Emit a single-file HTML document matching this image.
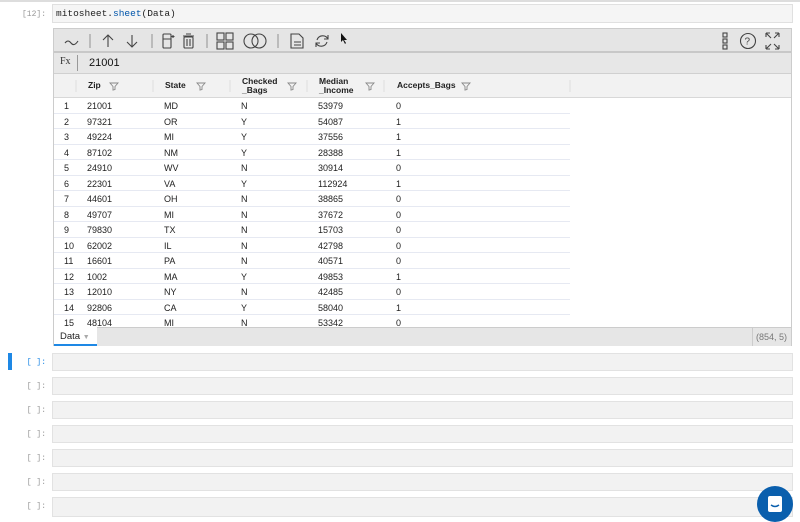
<!DOCTYPE html>
<html><head><style>
*{box-sizing:border-box;margin:0;padding:0}
body{width:800px;height:514px;overflow:hidden;background:#fff;font-family:"Liberation Sans",sans-serif;position:relative}
.abs{position:absolute}
.prompt{position:absolute;font-family:"Liberation Mono",monospace;font-size:8px;color:#999;text-align:right;width:46px;left:0}
.cell{position:absolute;left:52px;width:741px;height:18px;background:#f2f2f2;border:1px solid #e2e2e2}
.tb svg{position:absolute}
.hdr{position:absolute;top:74px;height:24px;font-size:8.5px;font-weight:bold;color:#222;line-height:9.5px;display:flex;align-items:center}
.row{position:absolute;left:54px;width:516px;height:15.5px;border-bottom:1px solid #e6e9f2;font-size:9px;color:#222}
.row span{position:absolute;top:3px}
</style></head><body>
<div class="abs" style="left:0;top:0;width:800px;height:2px;background:#ddd"></div>
<div class="prompt" style="top:10px">[12]:</div>
<div class="abs" style="left:52px;top:4px;width:741px;height:19px;background:#f5f5f5;border:1px solid #e0e0e0;font-family:'Liberation Mono',monospace;font-size:9.5px;padding:3px 3px;color:#222">mitosheet.<span style="color:#0055aa">sheet</span>(Data)</div>

<div class="abs" style="left:53px;top:28px;width:739px;height:318px;border:1px solid #ccc;background:#fff"></div>
<div class="abs tb" style="left:54px;top:29px;width:737px;height:24px;background:#e5e5e5;border-bottom:2px solid #c8c8c8">
<svg width="737" height="24" fill="none" stroke="#444" stroke-width="1.1">
<path d="M11 14 q3 -4 6 0 q3 4 7 -2"/>
<path d="M36 5v14M98 5v14M153 5v14M224 5v14" stroke="#999"/>
<path d="M54 6v12M49 11l5-5 5 5"/>
<path d="M78 6v12M73 13l5 5 5-5"/>
<rect x="109" y="5" width="8" height="14" rx="1"/><path d="M109 10h8M119 6v3M117.5 7.5h3"/>
<rect x="130" y="8" width="9" height="11" rx="1"/><path d="M129 7h11M132 5h5M133 10v7M136 10v7"/>
<rect x="163" y="4" width="7" height="7"/><rect x="172" y="4" width="7" height="7"/><rect x="163" y="13" width="7" height="7"/><rect x="172" y="13" width="7" height="7"/>
<circle cx="197" cy="12" r="7"/><circle cx="205" cy="12" r="7"/>
<path d="M237 5h8l4 4v10h-12z M240 13h7M240 16h7"/>
<path d="M274 10a6 6 0 0 0-11 1M262 14a6 6 0 0 0 11-1M274 6v4h-4M262 18v-4h4"/>
<path d="M287 4v9l2-2 2 4 1-1-2-3h3z" fill="#111" stroke="none"/>
<rect x="669" y="4" width="4" height="4"/><rect x="669" y="10" width="4" height="4"/><rect x="669" y="16" width="4" height="4"/>
<circle cx="694" cy="12" r="7.5"/>
<text x="690.5" y="15.5" font-size="10" fill="#444" stroke="none" font-family="Liberation Sans">?</text>
<path d="M712 4l5 5M712 4h4M712 4v4M725 4l-5 5M725 4h-4M725 4v4M712 20l5-5M712 20h4M712 20v-4M725 20l-5-5M725 20h-4M725 20v-4"/>
</svg></div>
<div class="abs" style="left:54px;top:53px;width:737px;height:21px;background:#e7e7e7;border-bottom:1px solid #d0d0d0"></div>
<div class="abs" style="left:60px;top:56px;font-family:'Liberation Serif',serif;font-size:10px;color:#333">Fx</div>
<div class="abs" style="left:77px;top:55px;width:1px;height:16px;background:#999"></div>
<div class="abs" style="left:89px;top:57px;font-size:11px;color:#111">21001</div>
<div class="abs" style="left:54px;top:74px;width:737px;height:24px;background:#f2f2f2;border-bottom:1px solid #d8d8d8"></div>
<div class="abs" style="left:54px;top:98px;width:737px;height:229px;background:#fff"></div>
<div class="hdr" style="left:88px">Zip</div>
<div class="hdr" style="left:165px">State</div>
<div class="hdr" style="left:242px">Checked<br>_Bags</div>
<div class="hdr" style="left:319px">Median<br>_Income</div>
<div class="hdr" style="left:397px">Accepts_Bags</div>
<svg class="abs" style="left:0;top:0" width="800" height="100" fill="none" stroke="#888" stroke-width="0.9">
<path d="M110 83h8l-3 3.5v3l-2 .5v-3.5z M197 83h8l-3 3.5v3l-2 .5v-3.5z M288 83h8l-3 3.5v3l-2 .5v-3.5z M366 83h8l-3 3.5v3l-2 .5v-3.5z M462 83h8l-3 3.5v3l-2 .5v-3.5z"/>
<path d="M76 80v12M153 80v12M230 80v12M307 80v12M384 80v12M570 80v12" stroke="#ddd"/>
</svg>
<div id="rows"></div>
<div class="abs" style="left:54px;top:327px;width:737px;height:19px;background:#e6e6e6;border-top:1px solid #ccc"></div>
<div class="abs" style="left:54px;top:327px;width:43px;height:19px;background:#fff;border-bottom:2px solid #1e88e5;font-size:9.5px;padding:4px 6px;color:#222">Data <span style="color:#aaa;font-size:7px">▼</span></div>
<div class="abs" style="left:752px;top:327px;width:40px;height:19px;border-left:1px solid #ccc;font-size:9px;color:#777;padding:5px 3px;white-space:nowrap">(854, 5)</div>

<div class="abs" style="left:8px;top:353px;width:4px;height:17px;background:#1e88e5"></div>
<div class="prompt" style="top:358px;color:#1e88e5">[ ]:</div><div class="cell" style="top:353px"></div>
<div class="prompt" style="top:382px">[ ]:</div><div class="cell" style="top:377px"></div>
<div class="prompt" style="top:406px">[ ]:</div><div class="cell" style="top:401px"></div>
<div class="prompt" style="top:430px">[ ]:</div><div class="cell" style="top:425px"></div>
<div class="prompt" style="top:454px">[ ]:</div><div class="cell" style="top:449px"></div>
<div class="prompt" style="top:478px">[ ]:</div><div class="cell" style="top:473px"></div>
<div class="prompt" style="top:502px">[ ]:</div><div class="cell" style="top:497px;height:20px"></div>
<div class="abs" style="left:757px;top:486px;width:36px;height:36px;border-radius:50%;background:#0a5fad"></div>
<svg class="abs" style="left:765px;top:494px" width="20" height="20" fill="none"><rect x="3" y="2" width="14" height="16" rx="2" fill="#fff"/><path d="M6 11q4 3 8 0" stroke="#0a5fad" stroke-width="1.5"/></svg>
<script>
var d=[[21001,'MD','N',53979,0],[97321,'OR','Y',54087,1],[49224,'MI','Y',37556,1],[87102,'NM','Y',28388,1],[24910,'WV','N',30914,0],[22301,'VA','Y',112924,1],[44601,'OH','N',38865,0],[49707,'MI','N',37672,0],[79830,'TX','N',15703,0],[62002,'IL','N',42798,0],[16601,'PA','N',40571,0],[1002,'MA','Y',49853,1],[12010,'NY','N',42485,0],[92806,'CA','Y',58040,1],[48104,'MI','N',53342,0]];
var h='';d.forEach(function(r,i){var t=98+i*15.5;var hh=i==14?327-t:15.5;h+='<div class="row" style="top:'+t+'px;height:'+hh+'px;overflow:hidden'+(i==14?';border:none':'')+'"><span style="left:10px">'+(i+1)+'</span><span style="left:33px">'+r[0]+'</span><span style="left:110px">'+r[1]+'</span><span style="left:187px">'+r[2]+'</span><span style="left:264px">'+r[3]+'</span><span style="left:342px">'+r[4]+'</span></div>';});
document.getElementById('rows').innerHTML=h;
</script>
</body></html>
